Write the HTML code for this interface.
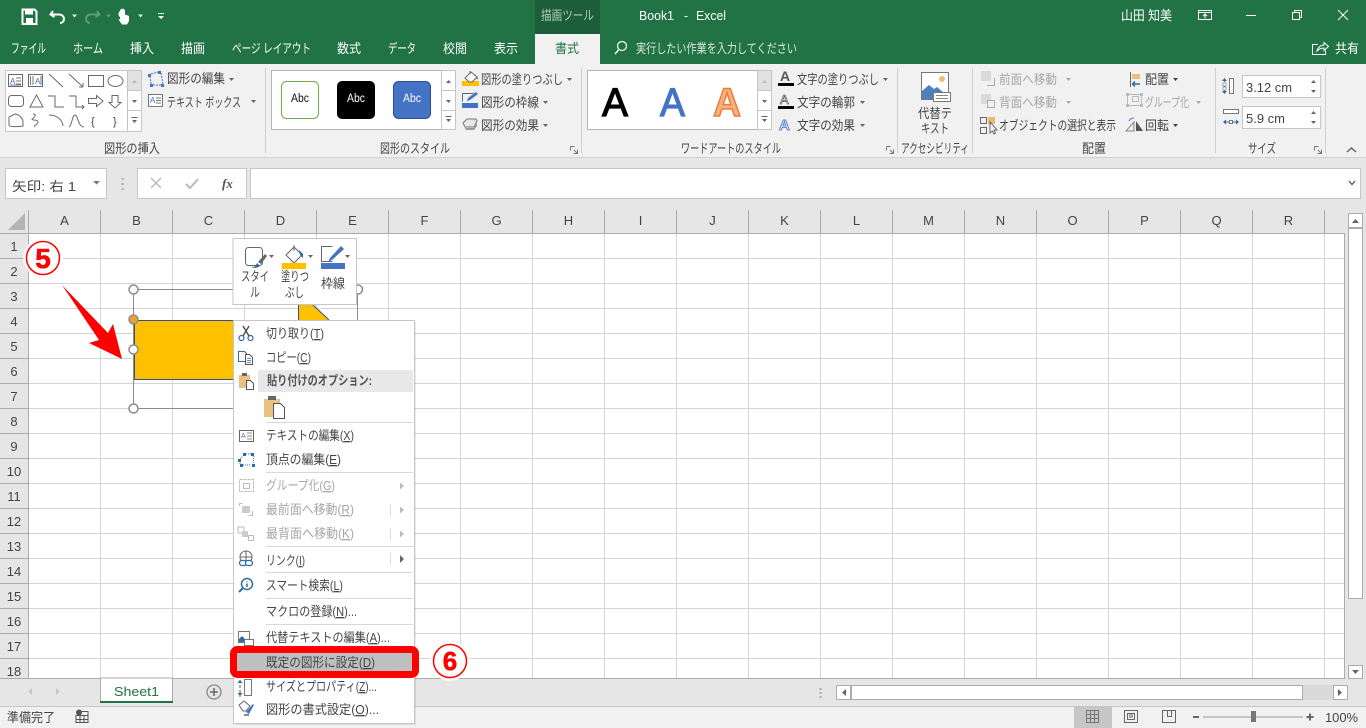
<!DOCTYPE html>
<html lang="ja"><head><meta charset="utf-8"><title>Book1 - Excel</title>
<style>
html,body{margin:0;padding:0;width:1366px;height:728px;overflow:hidden;background:#e6e6e6}
svg{display:block;position:absolute;left:0;top:0}
text{font-family:"Liberation Sans","Noto Sans CJK JP",sans-serif;font-size:13px;fill:#444}
.w text{fill:#fff}
.g text{fill:#a6a6a6}
.h text{font-size:13px;text-anchor:middle;fill:#444}
</style></head><body>
<svg width="1366" height="728" viewBox="0 0 1366 728" xmlns="http://www.w3.org/2000/svg">
<!-- backgrounds -->
<rect width="1366" height="728" fill="#e6e6e6"/>
<rect width="1366" height="64" fill="#217346"/>
<rect x="535" width="65" height="34" fill="#1c5e39"/>
<rect x="535" y="34" width="65" height="30" fill="#f1f1f1"/>
<rect y="64" width="1366" height="93" fill="#f1f1f1"/>
<rect y="157" width="1366" height="1" fill="#d2d2d2"/>

<!-- quick access -->
<path d="M22.500 9.500h12l2 2v12.500h-14z" fill="none" stroke="#fff" stroke-width="2"/>
<rect x="25" y="10" width="8" height="4.500" fill="#fff"/><rect x="26" y="18" width="7" height="6" fill="#fff"/>
<path d="M53 11l-2.500 3.500 4 2.500M51 14.500h8c3 0 5 2 5 4.500s-2 4-4 4" fill="none" stroke="#fff" stroke-width="2"/>
<path d="M72 14.500h5l-2.500 3z" fill="#dfeae4"/>
<path d="M97 11l2.500 3.500-4 2.500M99 14.500h-8c-3 0-5 2-5 4.500s2 4 4 4" fill="none" stroke="#5f9a79" stroke-width="2"/>
<path d="M106 14.500h5l-2.500 3z" fill="#5f9a79"/>
<path d="M120 11c0-3 5-3 5 0v3.500l4 1.500v5l-2 3.500h-5l-3.500-5 1.500-.5V17c-2-1-2-4.500 0-6z" fill="#fff"/>
<path d="M138 14.500h5l-2.500 3z" fill="#dfeae4"/>
<path d="M158 13h6v1h-6zM158 16h6l-3 3z" fill="#fff"/>

<!-- title text -->
<text x="541" y="20" textLength="53" lengthAdjust="spacingAndGlyphs" style="fill:#b4cdbf">描画ツール</text>
<g class="w">
<text x="639" y="20" textLength="35" lengthAdjust="spacingAndGlyphs">Book1</text>
<text x="684" y="20" textLength="4" lengthAdjust="spacingAndGlyphs">-</text>
<text x="696" y="20" textLength="30" lengthAdjust="spacingAndGlyphs">Excel</text>
<text x="1121" y="20" textLength="51" lengthAdjust="spacingAndGlyphs">山田 知美</text>
<text x="11" y="53" textLength="35" lengthAdjust="spacingAndGlyphs">ファイル</text>
<text x="73" y="53" textLength="30" lengthAdjust="spacingAndGlyphs">ホーム</text>
<text x="130" y="53" textLength="24" lengthAdjust="spacingAndGlyphs">挿入</text>
<text x="181" y="53" textLength="24" lengthAdjust="spacingAndGlyphs">描画</text>
<text x="232" y="53" textLength="79" lengthAdjust="spacingAndGlyphs">ページ レイアウト</text>
<text x="337" y="53" textLength="24" lengthAdjust="spacingAndGlyphs">数式</text>
<text x="388" y="53" textLength="28" lengthAdjust="spacingAndGlyphs">データ</text>
<text x="443" y="53" textLength="24" lengthAdjust="spacingAndGlyphs">校閲</text>
<text x="494" y="53" textLength="24" lengthAdjust="spacingAndGlyphs">表示</text>
<text x="636" y="53" textLength="161" lengthAdjust="spacingAndGlyphs" style="fill:#d9e6de">実行したい作業を入力してください</text>
<text x="1335" y="53" textLength="24" lengthAdjust="spacingAndGlyphs">共有</text>
</g>
<text x="555" y="53" textLength="24" lengthAdjust="spacingAndGlyphs" style="fill:#217346">書式</text>
<circle cx="622" cy="46" r="4.500" fill="none" stroke="#fff" stroke-width="1.200"/><path d="M618.500 50l-3.500 4" stroke="#fff" stroke-width="1.500"/>

<!-- window controls -->
<g fill="none" stroke="#fff">
<path d="M1198.500 10.500h13v9h-13zM1198.500 12.500h13M1205 18.500v-4M1203 16l2-2 2 2"/>
<path d="M1246 15.500h10"/>
<path d="M1292.500 12.500h7v7h-7zM1294.500 12.500v-2h7v7h-2"/>
<path d="M1338 10l10 10M1348 10l-10 10"/>
<path d="M1318 44.500h-5.500v10h13v-4M1317 51c1-4 4-6 7-6v-2.500l4.500 4-4.500 4V48c-3 0-5 1-7 3z"/>
</g>

<!-- ribbon separators -->
<path d="M265.500 68v85M581.500 68v85M897.500 68v85M972.500 68v85M1215.500 68v85M1325.500 68v85" stroke="#cfcfcf"/>

<!-- shape gallery -->
<rect x="5.500" y="70.500" width="136" height="61" fill="#fff" stroke="#c6c6c6"/>
<rect x="127.500" y="70.500" width="14" height="20" fill="#e1e1e1" stroke="#c6c6c6"/>
<rect x="127.500" y="90.500" width="14" height="20" fill="#fff" stroke="#c6c6c6"/>
<rect x="127.500" y="110.500" width="14" height="21" fill="#fff" stroke="#c6c6c6"/>
<path d="M132 83h5l-2.500-3z" fill="#bbb"/><path d="M132 100h5l-2.500 3z" fill="#666"/><path d="M131.500 117h6v1h-6zM132 120h5l-2.500 3z" fill="#666"/>
<g fill="none" stroke="#6a6a6a">
<rect x="8.500" y="74.500" width="14" height="12"/><rect x="28.500" y="74.500" width="14" height="12"/>
<path d="M49 74l14 13M69 74l14 13M83 87v-4M83 87h-4"/>
<rect x="88.500" y="75.500" width="15" height="11"/><ellipse cx="115.500" cy="81" rx="7.500" ry="5.500"/>
<rect x="8.500" y="95.500" width="15" height="11" rx="3"/><path d="M30 107l6.500-12 6.500 12z"/>
<path d="M48 96h7v11h9M69 96h7v11h8M82 105l2 2-2 2"/>
<path d="M88.500 98.500h8v-3l6.500 5.500-6.500 5.500v-3h-8zM112 95.500h6v7h3l-6 5.500-6-5.500h3z"/>
<path d="M9 125v-8l6-3c3 0 8 4 8 8v4c-5 1-14 1-14-1zM33 114c4 0 2 3-1 5 0 2 6 0 6 3 0 3-5 3-3 5"/>
<path d="M49 115c6 0 13 3 14 11M69 127c3-1 3-12 6-12s3 12 9 12"/>
</g>
<g style="fill:#444"><text x="91" y="125" style="font-size:11px">{</text><text x="113" y="125" style="font-size:11px">}</text></g>
<text x="10" y="84" style="font-size:8px;fill:#4472c4">A</text><text x="35" y="84" style="font-size:8px;fill:#4472c4">A</text>
<path d="M16 78h5M16 81h5M16 84h5M10 85h11M30.500 76v9M33 76v9M41 76v9" stroke="#777" fill="none"/>

<!-- edit shape / textbox -->
<g fill="#4472c4"><rect x="148" y="74" width="3" height="3"/><rect x="158" y="71" width="3" height="3"/><rect x="161" y="84" width="3" height="3"/><rect x="150" y="84" width="3" height="3"/></g>
<path d="M151 74l7-2M161 73l2 11M161 85h-8M151 84l-1-7" stroke="#4472c4" stroke-dasharray="2 1" fill="none"/>
<text x="167" y="83" textLength="58" lengthAdjust="spacingAndGlyphs">図形の編集</text>
<path d="M229 78h5l-2.500 3z" fill="#666"/>
<rect x="148.500" y="94.500" width="14" height="12" fill="#fff" stroke="#777"/><text x="150" y="103" style="font-size:8px;fill:#4472c4">A</text><path d="M156 98h5M156 100.500h5M156 103h5" stroke="#777"/>
<text x="167" y="107" textLength="74" lengthAdjust="spacingAndGlyphs">テキスト ボックス</text>
<path d="M251 100h5l-2.500 3z" fill="#666"/>
<text x="104" y="153" textLength="56" lengthAdjust="spacingAndGlyphs">図形の挿入</text>

<!-- style gallery -->
<rect x="271.500" y="70.500" width="170" height="59" fill="#fff" stroke="#b4b4b4"/>
<rect x="441.500" y="70.500" width="14" height="20" fill="#fff" stroke="#c6c6c6"/>
<rect x="441.500" y="90.500" width="14" height="20" fill="#fff" stroke="#c6c6c6"/>
<rect x="441.500" y="110.500" width="14" height="19" fill="#fff" stroke="#c6c6c6"/>
<path d="M446 83h5l-2.500-3z" fill="#666"/><path d="M446 100h5l-2.500 3z" fill="#666"/><path d="M445.500 116h6v1h-6zM446 119h5l-2.500 3z" fill="#666"/>
<rect x="281.500" y="81.500" width="37" height="37" rx="5" fill="#fff" stroke="#70ad47"/>
<rect x="337" y="81" width="38" height="38" rx="5" fill="#000"/>
<rect x="393.500" y="81.500" width="37" height="37" rx="5" fill="#4472c4" stroke="#2f528f"/>
<text x="291" y="102" textLength="18" lengthAdjust="spacingAndGlyphs" style="font-size:11.500px;fill:#111">Abc</text>
<text x="347" y="102" textLength="18" lengthAdjust="spacingAndGlyphs" style="font-size:11.500px;fill:#fff">Abc</text>
<text x="403" y="102" textLength="18" lengthAdjust="spacingAndGlyphs" style="font-size:11.500px;fill:#fff">Abc</text>

<!-- fill/outline/effect -->
<rect x="462" y="81" width="17" height="5" fill="#ffc000"/>
<path d="M465 78l6-6 6 5-5 5h-3zM470 71v3" fill="#fff" stroke="#666"/><path d="M475 74l3 4-1 2z" fill="#4472c4"/>
<text x="481" y="84" textLength="82" lengthAdjust="spacingAndGlyphs">図形の塗りつぶし</text><path d="M567 78h5l-2.500 3z" fill="#666"/>
<rect x="462" y="103" width="16" height="5" fill="#4472c4"/>
<path d="M473.500 93.500h-11v8" fill="none" stroke="#666"/><path d="M467 101l1-3 8-6 2 2-8 6z" fill="#4472c4"/>
<text x="481" y="107" textLength="58" lengthAdjust="spacingAndGlyphs">図形の枠線</text><path d="M543 101h5l-2.500 3z" fill="#666"/>
<path d="M463 123l4-4h9l1 2-3 6-9 0z" fill="#e8e8e8" stroke="#777"/><path d="M465 128h9l3-5v3l-3 4h-8z" fill="#999"/>
<text x="481" y="130" textLength="58" lengthAdjust="spacingAndGlyphs">図形の効果</text><path d="M543 124h5l-2.500 3z" fill="#666"/>
<text x="380" y="153" textLength="70" lengthAdjust="spacingAndGlyphs">図形のスタイル</text>
<path d="M570.500 146.500h4M570.500 146.500v4M574 150l3 3M577.500 149.500v4h-4" stroke="#777" fill="none"/>

<!-- wordart gallery -->
<rect x="587.500" y="70.500" width="170" height="59" fill="#fff" stroke="#b4b4b4"/>
<rect x="757.500" y="70.500" width="14" height="20" fill="#e1e1e1" stroke="#c6c6c6"/>
<rect x="757.500" y="90.500" width="14" height="20" fill="#fff" stroke="#c6c6c6"/>
<rect x="757.500" y="110.500" width="14" height="19" fill="#fff" stroke="#c6c6c6"/>
<path d="M762 83h5l-2.500-3z" fill="#bbb"/><path d="M762 100h5l-2.500 3z" fill="#666"/><path d="M761.500 116h6v1h-6zM762 119h5l-2.500 3z" fill="#666"/>
<text x="602" y="116" style="font-size:40px;fill:#000;stroke:#000;stroke-width:1.200px" textLength="26" lengthAdjust="spacingAndGlyphs">A</text>
<text x="660" y="116" style="font-size:40px;fill:#4472c4;stroke:#4472c4;stroke-width:1.200px" textLength="25" lengthAdjust="spacingAndGlyphs">A</text>
<text x="713" y="116" style="font-size:40px;font-weight:bold;fill:#f4b183;stroke:#ed7d31;stroke-width:1.500px" textLength="28" lengthAdjust="spacingAndGlyphs">A</text>

<!-- text fill/outline/effect -->
<rect x="778" y="83" width="16" height="3" fill="#000"/>
<text x="780" y="81" style="font-size:14px;font-weight:bold;fill:#555">A</text>
<text x="797" y="84" textLength="82" lengthAdjust="spacingAndGlyphs">文字の塗りつぶし</text><path d="M883 78h5l-2.500 3z" fill="#666"/>
<rect x="778" y="106" width="16" height="3" fill="#000"/>
<text x="780" y="104" style="font-size:13px;fill:#fff;stroke:#666;stroke-width:.8px">A</text>
<text x="797" y="107" textLength="58" lengthAdjust="spacingAndGlyphs">文字の輪郭</text><path d="M860 101h5l-2.500 3z" fill="#666"/>
<text x="779" y="130" style="font-size:15px;font-weight:bold;fill:#dbe6f5;stroke:#4472c4;stroke-width:.8px">A</text>
<text x="797" y="130" textLength="58" lengthAdjust="spacingAndGlyphs">文字の効果</text><path d="M860 124h5l-2.500 3z" fill="#666"/>
<text x="681" y="153" textLength="100" lengthAdjust="spacingAndGlyphs">ワードアートのスタイル</text>
<path d="M886.500 146.500h4M886.500 146.500v4M890 150l3 3M893.500 149.500v4h-4" stroke="#777" fill="none"/>

<!-- alt text -->
<rect x="921.500" y="72.500" width="27" height="27" fill="#fff" stroke="#777"/>
<circle cx="942" cy="79" r="3" fill="#f0c070"/>
<path d="M922 99v-8l7-6 5 4 3-2 7 6v6z" fill="#4a80bd"/>
<rect x="933.500" y="92.500" width="17" height="9" fill="#fff" stroke="#777"/><path d="M936 95.500h12M936 98.500h12" stroke="#888"/>
<text x="918" y="118" textLength="34" lengthAdjust="spacingAndGlyphs">代替テ</text>
<text x="921" y="133" textLength="28" lengthAdjust="spacingAndGlyphs">キスト</text>
<text x="901" y="153" textLength="68" lengthAdjust="spacingAndGlyphs">アクセシビリティ</text>

<!-- arrange -->
<rect x="981" y="71" width="10" height="10" fill="#dcd8dc"/><path d="M994.500 78v7.500h-7.500" fill="none" stroke="#aaa"/>
<rect x="981" y="94" width="10" height="10" fill="#dcd8dc"/><rect x="987.500" y="100.500" width="7" height="7" fill="#f1f1f1" stroke="#aaa"/>
<g class="g">
<text x="999" y="84" textLength="58" lengthAdjust="spacingAndGlyphs">前面へ移動</text>
<text x="999" y="107" textLength="58" lengthAdjust="spacingAndGlyphs">背面へ移動</text>
<text x="1145" y="107" textLength="44" lengthAdjust="spacingAndGlyphs">グループ化</text>
</g>
<path d="M1066 78h5l-2.500 3zM1066 101h5l-2.500 3zM1196 101h5l-2.500 3z" fill="#aaa"/>
<g fill="none" stroke="#666"><rect x="980.500" y="117.500" width="6" height="6"/><rect x="980.500" y="127.500" width="6" height="6"/><rect x="988.500" y="117.500" width="6" height="6" fill="#e9b872" stroke="#e9b872"/></g>
<path d="M990 122v11l2.500-2 1.500 3 1.500-1-1.500-3h3z" fill="#fff" stroke="#666"/>
<text x="999" y="130" textLength="117" lengthAdjust="spacingAndGlyphs">オブジェクトの選択と表示</text>
<path d="M1130.500 72v15" stroke="#666"/><rect x="1132" y="74" width="8" height="5" fill="#eec077"/><path d="M1140 84h-7M1135 81.500l-2.500 2.500 2.500 2.500" fill="none" stroke="#2e6ca8" stroke-width="1.500"/>
<text x="1145" y="84" textLength="24" lengthAdjust="spacingAndGlyphs">配置</text><path d="M1173 78h5l-2.500 3z" fill="#444"/>
<g fill="#bbb"><rect x="1126" y="93" width="3" height="3"/><rect x="1140" y="93" width="3" height="3"/><rect x="1126" y="104" width="3" height="3"/><rect x="1140" y="104" width="3" height="3"/></g>
<path d="M1132.500 96.500h6v5h-6zM1129 94.500h11M1129 105.500h11M1127.500 96v8M1141.500 96v8" fill="none" stroke="#bbb"/>
<path d="M1126 131l8-9v9z" fill="none" stroke="#888"/><path d="M1136 121l7 10h-7z" fill="#555"/><path d="M1129 121c1-2 3-3 5-3" fill="none" stroke="#4472c4"/>
<text x="1145" y="130" textLength="24" lengthAdjust="spacingAndGlyphs">回転</text><path d="M1173 124h5l-2.500 3z" fill="#444"/>
<text x="1082" y="153" textLength="24" lengthAdjust="spacingAndGlyphs">配置</text>

<!-- size -->
<rect x="1229.500" y="78.500" width="4" height="15" fill="#fff" stroke="#777"/>
<path d="M1224.500 79v14" stroke="#2e6ca8" stroke-dasharray="3 2"/><path d="M1222 81l2.500-3 2.500 3zM1222 91l2.500 3 2.500-3z" fill="#2e6ca8"/><rect x="1223" y="83" width="3" height="3" fill="#fff" stroke="#777" stroke-width=".6"/><rect x="1223" y="87" width="3" height="3" fill="#fff" stroke="#777" stroke-width=".6"/>
<rect x="1223.500" y="109.500" width="15" height="4" fill="#fff" stroke="#777"/>
<path d="M1224 122h14" stroke="#2e6ca8"/><path d="M1226 119.500l-3 2.500 3 2.500zM1236 119.500l3 2.500-3 2.500z" fill="#2e6ca8"/><rect x="1229.500" y="120.500" width="3" height="3" fill="#fff" stroke="#777"/>
<rect x="1242.500" y="75.500" width="78" height="22" fill="#fff" stroke="#c6c6c6"/>
<rect x="1242.500" y="106.500" width="78" height="22" fill="#fff" stroke="#c6c6c6"/>
<text x="1246" y="92" textLength="46" lengthAdjust="spacingAndGlyphs" style="font-size:13px">3.12 cm</text>
<text x="1246" y="123" textLength="39" lengthAdjust="spacingAndGlyphs" style="font-size:13px">5.9 cm</text>
<path d="M1311 83h5l-2.500-3zM1311 90h5l-2.500 3zM1311 114h5l-2.500-3zM1311 121h5l-2.500 3z" fill="#666"/>
<text x="1248" y="153" textLength="28" lengthAdjust="spacingAndGlyphs">サイズ</text>
<path d="M1314.500 146.500h4M1314.500 146.500v4M1318 150l3 3M1321.500 149.500v4h-4" stroke="#777" fill="none"/>
<path d="M1347 152l4.500-4 4.500 4" fill="none" stroke="#666" stroke-width="1.500"/>

<!-- formula bar -->
<rect x="5.500" y="168.500" width="101" height="30" fill="#fff" stroke="#c6c6c6"/>
<text x="12" y="191" textLength="64" lengthAdjust="spacingAndGlyphs" style="font-size:13px">矢印: 右 1</text>
<path d="M93 181h7l-3.500 3.500z" fill="#777"/>
<path d="M122.500 178v2M122.500 183v2M122.500 188v2" stroke="#aaa" stroke-width="2"/>
<rect x="137.500" y="168.500" width="109" height="30" fill="#fff" stroke="#c6c6c6"/>
<path d="M151 178l10 10M161 178l-10 10" stroke="#bbb" stroke-width="1.500"/>
<path d="M186 184l4 4 8-9" fill="none" stroke="#bbb" stroke-width="2"/>
<text x="222" y="188" style="font-family:'Liberation Serif',serif;font-style:italic;font-weight:bold;font-size:13px;fill:#555">fx</text>
<rect x="250.500" y="168.500" width="1110" height="30" fill="#fff" stroke="#c6c6c6"/>
<path d="M1349 181l3 3.500 3-3.500" fill="none" stroke="#555" stroke-width="1.300"/>

<!-- sheet -->
<rect x="29" y="234" width="1315" height="444" fill="#fff"/>
<path d="M100.500 234v444M172.500 234v444M244.500 234v444M316.500 234v444M388.500 234v444M460.500 234v444M532.500 234v444M604.500 234v444M676.500 234v444M748.500 234v444M820.500 234v444M892.500 234v444M964.500 234v444M1036.500 234v444M1108.500 234v444M1180.500 234v444M1252.500 234v444M1324.500 234v444M29 258.500h1315M29 283.500h1315M29 308.500h1315M29 333.500h1315M29 358.500h1315M29 383.500h1315M29 408.500h1315M29 433.500h1315M29 458.500h1315M29 483.500h1315M29 508.500h1315M29 533.500h1315M29 558.500h1315M29 583.500h1315M29 608.500h1315M29 633.500h1315M29 658.500h1315" stroke="#d4d4d4"/>
<path d="M28.500 210v468M100.500 210v23M172.500 210v23M244.500 210v23M316.500 210v23M388.500 210v23M460.500 210v23M532.500 210v23M604.500 210v23M676.500 210v23M748.500 210v23M820.500 210v23M892.500 210v23M964.500 210v23M1036.500 210v23M1108.500 210v23M1180.500 210v23M1252.500 210v23M1324.500 210v23M0 233.500h1344.500v445M0 258.500h28M0 283.500h28M0 308.500h28M0 333.500h28M0 358.500h28M0 383.500h28M0 408.500h28M0 433.500h28M0 458.500h28M0 483.500h28M0 508.500h28M0 533.500h28M0 558.500h28M0 583.500h28M0 608.500h28M0 633.500h28M0 658.500h28M0 678.500h1345" stroke="#ababab" fill="none"/>
<path d="M8 230l17-17v17z" fill="#b5b5b5"/>
<g class="h">
<text x="64.500" y="225">A</text><text x="136.500" y="225">B</text><text x="208.500" y="225">C</text><text x="280.500" y="225">D</text><text x="352.500" y="225">E</text><text x="424.500" y="225">F</text><text x="496.500" y="225">G</text><text x="568.500" y="225">H</text><text x="640.500" y="225">I</text><text x="712.500" y="225">J</text><text x="784.500" y="225">K</text><text x="856.500" y="225">L</text><text x="928.500" y="225">M</text><text x="1000.500" y="225">N</text><text x="1072.500" y="225">O</text><text x="1144.500" y="225">P</text><text x="1216.500" y="225">Q</text><text x="1288.500" y="225">R</text>
<text x="14" y="251">1</text><text x="14" y="276">2</text><text x="14" y="301">3</text><text x="14" y="326">4</text><text x="14" y="351">5</text><text x="14" y="376">6</text><text x="14" y="401">7</text><text x="14" y="426">8</text><text x="14" y="451">9</text><text x="14" y="476">10</text><text x="14" y="501">11</text><text x="14" y="526">12</text><text x="14" y="551">13</text><text x="14" y="576">14</text><text x="14" y="601">15</text><text x="14" y="626">16</text><text x="14" y="651">17</text><text x="14" y="676">18</text>
</g>

<!-- v scrollbar -->
<rect x="1348.500" y="213.500" width="14" height="14" fill="#fff" stroke="#ababab"/>
<path d="M1352 223h7l-3.500-4z" fill="#666"/>
<rect x="1348.500" y="228.500" width="14" height="370" fill="#fff" stroke="#ababab"/>
<rect x="1348.500" y="665.500" width="14" height="13" fill="#fff" stroke="#ababab"/>
<path d="M1352 670h7l-3.500 4z" fill="#666"/>

<!-- sheet tabs bar -->
<path d="M32 688v7l-4-3.500zM56 688v7l4-3.500z" fill="#c6c6c6"/>
<rect x="100.500" y="678" width="72" height="24" fill="#fff" stroke="#ababab"/>
<rect x="100" y="701" width="73" height="2" fill="#217346"/>
<text x="114" y="696" textLength="45" lengthAdjust="spacingAndGlyphs" style="font-size:13px;fill:#217346">Sheet1</text>
<circle cx="214" cy="692" r="7" fill="none" stroke="#888" stroke-width="1.300"/><path d="M214 688v8M210 692h8" stroke="#666" stroke-width="1.500"/>
<path d="M820.500 688v2M820.500 692v2M820.500 696v2" stroke="#aaa" stroke-width="2"/>
<rect x="836.500" y="685.500" width="14" height="14" fill="#fff" stroke="#ababab"/><path d="M846 689v7l-4-3.500z" fill="#666"/>
<rect x="851.500" y="685.500" width="451" height="14" fill="#fff" stroke="#ababab"/>
<rect x="1303" y="685" width="30" height="15" fill="#dadada"/>
<rect x="1333.500" y="685.500" width="14" height="14" fill="#fff" stroke="#ababab"/><path d="M1338 689v7l4-3.500z" fill="#666"/>

<!-- status bar -->
<rect y="706" width="1366" height="22" fill="#f1f1f1"/><rect y="706" width="1366" height="1" fill="#c6c6c6"/>
<text x="7" y="722" textLength="48" lengthAdjust="spacingAndGlyphs">準備完了</text>
<circle cx="79" cy="712.500" r="3" fill="#555"/><path d="M80 711.500h8v11H76v-7h12M80 716v7M84 716v7M76 719.500h12" stroke="#555" fill="none"/>
<rect x="1074" y="707" width="38" height="21" fill="#c6c6c6"/>
<path d="M1086.500 710.500h12v12h-12zM1090.500 710.500v12M1094.500 710.500v12M1086.500 714.500h12M1086.500 718.500h12" fill="none" stroke="#777"/>
<path d="M1124.500 710.500h13v12h-13zM1127.500 713.500h7v6h-7zM1129 715h4M1129 717h4" fill="none" stroke="#666"/>
<path d="M1162.500 710.500h13v12h-13zM1167.500 710.500v6h4v-6" fill="none" stroke="#666"/>
<rect x="1193" y="716" width="6" height="2" fill="#666"/>
<rect x="1203" y="716.500" width="100" height="1" fill="#999"/>
<rect x="1251" y="711" width="5" height="11" fill="#777"/>
<path d="M1310 713.500v7M1306.500 717h7" stroke="#666" stroke-width="2"/>
<text x="1325" y="722" textLength="33" lengthAdjust="spacingAndGlyphs" style="font-size:13px">100%</text>

<!-- shape -->
<path d="M298 305h15l16 15h-31z" fill="#ffc000"/>
<path d="M298.500 305v15M313 305l16 15" stroke="#2f528f" fill="none"/>
<path d="M133.500 289.500h224v31M133.500 289.500v119h224" fill="none" stroke="#8c8c8c"/>
<rect x="134.500" y="320.500" width="120" height="59" fill="#ffc000" stroke="#2f528f"/>
<circle cx="358" cy="289.500" r="4.500" fill="#fff" stroke="#8c8c8c" stroke-width="1.500"/>
<circle cx="133.500" cy="289.500" r="4.500" fill="#fff" stroke="#8c8c8c" stroke-width="1.500"/>
<circle cx="133.500" cy="349.500" r="4.500" fill="#fff" stroke="#8c8c8c" stroke-width="1.500"/>
<circle cx="133.500" cy="408.500" r="4.500" fill="#fff" stroke="#8c8c8c" stroke-width="1.500"/>
<circle cx="133.500" cy="319.500" r="4.500" fill="#f0a030" stroke="#8c8c8c" stroke-width="1.500"/>

<!-- red arrow + 5 -->
<path d="M62 285l46 48 5-9 9 35-33-16 10-3z" fill="#ff0000"/>
<circle cx="43" cy="258" r="20" fill="#fff" opacity=".85"/>
<circle cx="43" cy="258" r="16.500" fill="#fff" stroke="#ff0000" stroke-width="1.500"/>
<text x="43" y="268" text-anchor="middle" style="font-size:28px;font-weight:bold;fill:#ff0000;stroke:#ff0000;stroke-width:.6px">5</text>

<!-- mini toolbar -->
<rect x="233" y="238.500" width="123.500" height="66" fill="#fff" stroke="#c6c6c6"/>
<rect x="245.500" y="247.500" width="17" height="18" rx="3" fill="none" stroke="#666"/>
<path d="M258 262l7-8 2 2-6 8z" fill="#666"/><path d="M250 268c3 0 5-1 7-5l3 3c-2 2-5 2-10 2z" fill="#2e6ca8"/>
<path d="M269 255h5l-2.500 3zM308 255h5l-2.500 3zM345 255h5l-2.500 3z" fill="#666"/>
<path d="M286 255l8-8 8 8-8 8z" fill="#fff" stroke="#666"/><path d="M294 245v6" stroke="#666"/><path d="M299 250l4 4 0 4-3-3z" fill="#2e6ca8"/>
<rect x="282" y="263" width="24" height="6" fill="#ffc000"/>
<path d="M332.500 246.500h-11v15h11" fill="none" stroke="#666"/><path d="M328 262l2-4 11-12 3 3-12 11z" fill="#4472c4"/>
<rect x="321" y="263" width="24" height="6" fill="#4472c4"/>
<text x="241" y="281" textLength="28" lengthAdjust="spacingAndGlyphs">スタイ</text>
<text x="250" y="297" textLength="10" lengthAdjust="spacingAndGlyphs">ル</text>
<text x="281" y="281" textLength="28" lengthAdjust="spacingAndGlyphs">塗りつ</text>
<text x="285" y="297" textLength="19" lengthAdjust="spacingAndGlyphs">ぶし</text>
<text x="321" y="288" textLength="24" lengthAdjust="spacingAndGlyphs">枠線</text>

<!-- context menu -->
<rect x="235" y="322" width="181" height="403" fill="#000" opacity=".08"/>
<rect x="233.500" y="320.500" width="181" height="403" fill="#fff" stroke="#c6c6c6"/>
<rect x="258" y="370" width="155" height="22" fill="#e8e8e8"/>
<path d="M266 422.500h147M266 472.500h147M266 546.500h147M266 572.500h147M266 598.500h147M266 624.500h147" stroke="#d8d8d8"/>
<text x="266" y="338" textLength="58" lengthAdjust="spacingAndGlyphs">切り取り(<tspan text-decoration="underline">T</tspan>)</text>
<text x="266" y="362" textLength="45" lengthAdjust="spacingAndGlyphs">コピー(<tspan text-decoration="underline">C</tspan>)</text>
<text x="267" y="385" textLength="105" lengthAdjust="spacingAndGlyphs" style="font-weight:bold;fill:#555">貼り付けのオプション:</text>
<text x="266" y="440" textLength="88" lengthAdjust="spacingAndGlyphs">テキストの編集(<tspan text-decoration="underline">X</tspan>)</text>
<text x="266" y="464" textLength="75" lengthAdjust="spacingAndGlyphs">頂点の編集(<tspan text-decoration="underline">E</tspan>)</text>
<g class="g">
<text x="266" y="490" textLength="69" lengthAdjust="spacingAndGlyphs">グループ化(<tspan text-decoration="underline">G</tspan>)</text>
<text x="266" y="514" textLength="88" lengthAdjust="spacingAndGlyphs">最前面へ移動(<tspan text-decoration="underline">R</tspan>)</text>
<text x="266" y="538" textLength="88" lengthAdjust="spacingAndGlyphs">最背面へ移動(<tspan text-decoration="underline">K</tspan>)</text>
</g>
<text x="266" y="565" textLength="39" lengthAdjust="spacingAndGlyphs">リンク(<tspan text-decoration="underline">I</tspan>)</text>
<text x="266" y="590" textLength="77" lengthAdjust="spacingAndGlyphs">スマート検索(<tspan text-decoration="underline">L</tspan>)</text>
<text x="266" y="616" textLength="91" lengthAdjust="spacingAndGlyphs">マクロの登録(<tspan text-decoration="underline">N</tspan>)...</text>
<text x="266" y="642" textLength="124" lengthAdjust="spacingAndGlyphs">代替テキストの編集(<tspan text-decoration="underline">A</tspan>)...</text>
<text x="266" y="691" textLength="111" lengthAdjust="spacingAndGlyphs">サイズとプロパティ(<tspan text-decoration="underline">Z</tspan>)...</text>
<text x="266" y="714" textLength="113" lengthAdjust="spacingAndGlyphs">図形の書式設定(<tspan text-decoration="underline">O</tspan>)...</text>
<path d="M400 482.500l4 3.500-4 3.500zM400 506.500l4 3.500-4 3.500zM400 530.500l4 3.500-4 3.500z" fill="#bbb"/><path d="M390.500 504v12M390.500 528v12M390.500 553v12" stroke="#ddd"/>
<path d="M400 555l4 4-4 4z" fill="#666"/>

<!-- menu icons -->
<g fill="none" stroke="#2e6ca8" stroke-width="1.200"><circle cx="241.500" cy="338" r="2.500"/><circle cx="250.500" cy="338" r="2.500"/></g>
<path d="M243 336l6-10M249 336l-6-10" stroke="#555" stroke-width="1.500"/>
<path d="M238.500 351.500h6l2 2v8h-8z" fill="#fff" stroke="#2e6ca8"/><path d="M245.500 354.500h4l3 3v7h-7z" fill="#fff" stroke="#555"/><path d="M247 358.500h4M247 360.500h4M247 362.500h4" stroke="#2e6ca8" stroke-width=".8"/>
<rect x="239" y="375" width="11" height="13" fill="#e9c282"/><rect x="242" y="373" width="5" height="3" fill="#666"/><path d="M246.500 380.500h4l3 3v6h-7z" fill="#fff" stroke="#555"/>
<rect x="264" y="399" width="16" height="18" fill="#e9c282"/><rect x="268" y="396" width="8" height="4" fill="#666"/><path d="M273.500 403.500h7l4 4v11h-11z" fill="#fff" stroke="#555"/>
<rect x="239.500" y="430.500" width="14" height="11" fill="#fff" stroke="#666"/><text x="241" y="438" style="font-size:7px;fill:#4472c4">A</text><path d="M247 433h5M247 436h5M247 439h5" stroke="#666" stroke-width=".8"/>
<g fill="#2e6ca8"><rect x="243" y="453" width="3" height="3"/><rect x="251" y="453" width="3" height="3"/><rect x="238" y="459" width="3" height="3"/><rect x="252" y="464" width="3" height="3"/><rect x="240" y="464" width="3" height="3"/></g><path d="M246 454h5M254 456l-1 8M243 465h8M240 464v-2M240 459l3-3" stroke="#2e6ca8" stroke-dasharray="1 1" fill="none"/>
<g fill="none" stroke="#bbb"><rect x="239.500" y="479.500" width="14" height="12" stroke-dasharray="3 1"/><rect x="243.500" y="483.500" width="6" height="5"/></g>
<path d="M239.500 506v-2.500h3M252.500 511v4.500h-4" fill="none" stroke="#bbb"/><rect x="242" y="506" width="8" height="7" fill="#ccc"/>
<rect x="238" y="527" width="6" height="6" fill="#fff" stroke="#bbb"/><rect x="242" y="531" width="6" height="6" fill="#ccc"/><rect x="248.500" y="535.500" width="5" height="5" fill="#fff" stroke="#bbb"/>
<circle cx="246" cy="557" r="6" fill="#fff" stroke="#666"/><path d="M240 557h12M246 551v12" stroke="#666"/><rect x="239.500" y="560.500" width="7" height="5" rx="2.500" fill="#fff" stroke="#2e6ca8" stroke-width="1.300"/><rect x="245.500" y="560.500" width="7" height="5" rx="2.500" fill="#fff" stroke="#2e6ca8" stroke-width="1.300"/>
<circle cx="247" cy="584" r="5.500" fill="#fff" stroke="#2e6ca8" stroke-width="1.500"/><path d="M247 581.500v.8M247 583.500v3.500" stroke="#444" stroke-width="1.300"/><path d="M243 588l-4 4" stroke="#2e6ca8" stroke-width="2"/>
<rect x="238.500" y="631.500" width="11" height="11" fill="#fff" stroke="#777"/><path d="M239 642v-3l3-3 3 3h1v3z" fill="#2e6ca8"/><rect x="244.500" y="639.500" width="9" height="6" fill="#fff" stroke="#777"/>
<rect x="244.500" y="679.500" width="7" height="16" fill="none" stroke="#777"/><path d="M240 680v17" stroke="#2e6ca8" stroke-dasharray="3 2"/><path d="M237.500 683l2.500-3 2.500 3zM237.500 693l2.500 3 2.500-3z" fill="#2e6ca8"/>
<path d="M239 705l5-4 6 5-4 5h-3z" fill="#fff" stroke="#666"/><path d="M246 712l7-8 1 1-5 9z" fill="#4472c4"/><path d="M244 714h5v2h-5z" fill="#888"/>

<!-- highlighted item -->
<rect x="233.500" y="649.500" width="182" height="25" rx="4" fill="#bfbfbf" stroke="#ff0000" stroke-width="7"/>
<text x="266" y="667" textLength="109" lengthAdjust="spacingAndGlyphs">既定の図形に設定(<tspan text-decoration="underline">D</tspan>)</text>
<circle cx="450" cy="661" r="20" fill="#fff" opacity=".85"/>
<circle cx="450" cy="661" r="16.500" fill="#fff" stroke="#ff0000" stroke-width="1.500"/>
<text x="450" y="670" text-anchor="middle" style="font-size:26px;font-weight:bold;fill:#ff0000;stroke:#ff0000;stroke-width:.6px">6</text>
</svg>
</body></html>
